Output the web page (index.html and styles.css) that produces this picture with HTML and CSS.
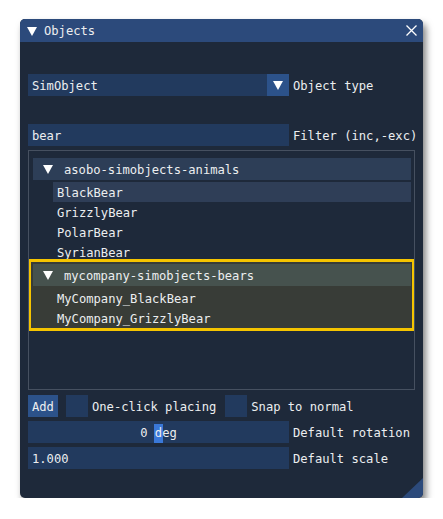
FILE: index.html
```html
<!DOCTYPE html>
<html>
<head>
<meta charset="utf-8">
<link rel="stylesheet" href="styles.css">
</head>
<body>
<div class="window">
  <div class="titlebar">
    <svg class="tri" width="10" height="9" viewBox="0 0 10 9"><polygon points="0,0 10,0 5,9" fill="#fff"/></svg>
    <span class="title">Objects</span>
    <svg class="close" width="11" height="11" viewBox="0 0 11 11"><path d="M0.5 0.5 L10.5 10.5 M10.5 0.5 L0.5 10.5" stroke="#fff" stroke-width="1.3"/></svg>
  </div>
  <div class="content">
    <div class="row">
      <div class="combo">
        <span class="combo-text">SimObject</span>
        <div class="arrow"><svg width="10" height="9" viewBox="0 0 10 9"><polygon points="0,0 10,0 5,9" fill="#fff"/></svg></div>
      </div>
      <span class="label">Object type</span>
    </div>
    <div class="row filter-row">
      <div class="field">bear</div>
      <span class="label">Filter (inc,-exc)</span>
    </div>
    <div class="list">
      <div class="group">
        <div class="header"><svg width="10" height="9" viewBox="0 0 10 9"><polygon points="0,0 10,0 5,9" fill="#fff"/></svg><span>asobo-simobjects-animals</span></div>
        <div class="items">
          <div class="item selected">BlackBear</div>
          <div class="item">GrizzlyBear</div>
          <div class="item">PolarBear</div>
          <div class="item">SyrianBear</div>
        </div>
      </div>
      <div class="group highlight">
        <div class="header"><svg width="10" height="9" viewBox="0 0 10 9"><polygon points="0,0 10,0 5,9" fill="#fff"/></svg><span>mycompany-simobjects-bears</span></div>
        <div class="items">
          <div class="item">MyCompany_BlackBear</div>
          <div class="item">MyCompany_GrizzlyBear</div>
        </div>
      </div>
    </div>
    <div class="row tools-row">
      <div class="button">Add</div>
      <div class="checkbox first"></div>
      <span class="label">One-click placing</span>
      <div class="checkbox second"></div>
      <span class="label">Snap to normal</span>
    </div>
    <div class="row gap-row">
      <div class="field slider">0 <span class="grab">d</span>eg</div>
      <span class="label">Default rotation</span>
    </div>
    <div class="row gap-row">
      <div class="field">1.000</div>
      <span class="label">Default scale</span>
    </div>
  </div>
  <div class="grip"></div>
</div>
</body>
</html>
```

FILE: styles.css
```css
html, body {
  margin: 0;
  padding: 0;
  background: #ffffff;
}

body {
  font-family: "DejaVu Sans Mono", "Liberation Mono", monospace;
  font-size: 12.15px;
  color: #eceef0;
}

.window {
  position: relative;
  margin: 19px 0 0 20px;
  width: 403px;
  height: 479px;
  background: #1e293a;
  border-radius: 5px;
  overflow: hidden;
  box-shadow: 3px 5px 7px rgba(0, 0, 0, 0.5);
}

.titlebar {
  height: 23px;
  background: #2c4a7b;
  display: flex;
  align-items: center;
  padding: 0 6px 0 7px;
}

.titlebar .title {
  margin-left: 7px;
  padding-top: 2px;
  line-height: 21px;
  flex: 1;
}

.tri {
  display: block;
  margin-top: 1px;
}

.close {
  display: block;
}

.content {
  padding: 32px 0 0 8px;
  display: flex;
  flex-direction: column;
}

.row {
  display: flex;
  align-items: center;
  height: 22px;
}

.filter-row {
  margin-top: 28px;
}

.gap-row {
  margin-top: 4px;
}

.tools-row {
  margin-top: 5px;
}

.label {
  margin-left: 4px;
  white-space: nowrap;
  padding-top: 2px;
  line-height: 20px;
}

.combo {
  width: 261px;
  height: 22px;
  background: #223a5e;
  display: flex;
  align-items: center;
}

.combo-text {
  flex: 1;
  padding-left: 4px;
  padding-top: 2px;
  line-height: 20px;
}

.arrow {
  width: 22px;
  height: 22px;
  background: #2c528a;
  display: flex;
  align-items: center;
  justify-content: center;
}

.arrow svg {
  display: block;
}

.field {
  width: 261px;
  height: 22px;
  padding-top: 2px;
  line-height: 20px;
  background: #223a5e;
  padding-left: 4px;
  box-sizing: border-box;
}

.slider {
  padding-left: 0;
  text-align: center;
}

.grab {
  background: #3a78d8;
  padding: 2px 1px 3px 1px;
  margin: 0 -1px;
}

.list {
  margin-top: 4px;
  width: 387px;
  height: 240px;
  box-sizing: border-box;
  border: 1px solid #465060;
  padding: 7px 3px 0 4px;
  overflow: hidden;
}

.header {
  height: 22px;
  background: #2d3e57;
  display: flex;
  align-items: center;
  padding-left: 10px;
}

.header svg {
  display: block;
}

.header span {
  margin-left: 11px;
  padding-top: 2px;
  line-height: 20px;
}

.items {
  margin-top: 2px;
  margin-left: 20px;
}

.item {
  height: 20px;
  box-sizing: border-box;
  padding-top: 2px;
  line-height: 18px;
  padding-left: 4px;
}

.item.selected {
  background: #2f3e57;
}

.highlight {
  position: relative;
  margin: -3px -4px 0 -5px;
  border: 3px solid #f5c400;
  padding: 2px 1px 0 2px;
  background: #383c37;
}

.highlight .header {
  background: #46524e;
}

.button {
  width: 30px;
  height: 22px;
  padding-top: 2px;
  line-height: 20px;
  background: #2c528a;
  padding-left: 4px;
  box-sizing: border-box;
}

.checkbox {
  width: 22px;
  height: 22px;
  background: #223a5e;
}

.checkbox.first {
  margin-left: 8px;
}

.checkbox.second {
  margin-left: 9px;
}

.grip {
  position: absolute;
  right: 0;
  bottom: 0;
  width: 21px;
  height: 20px;
  background: #2c4a7b;
  clip-path: polygon(100% 0, 100% 100%, 0 100%);
}
```
